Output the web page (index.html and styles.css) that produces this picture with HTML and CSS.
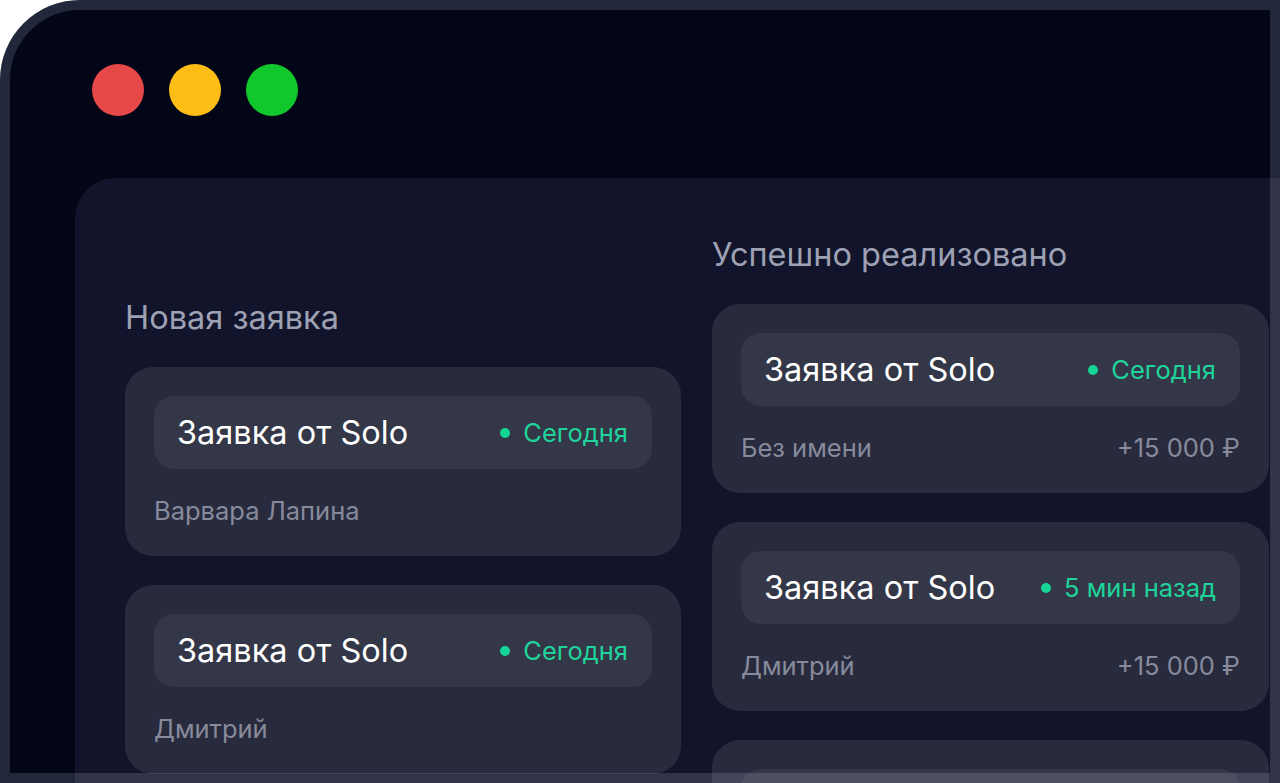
FILE: index.html
```html
<!DOCTYPE html>
<html lang="ru">
<head>
  <meta charset="UTF-8" />
  <meta name="viewport" content="width=device-width, initial-scale=1.0" />
  <title>Заявки</title>
  <link rel="stylesheet" href="styles.css">
</head>
<body>
  <div class="window">
    <div class="titlebar">
      <span class="light red"></span>
      <span class="light yellow"></span>
      <span class="light green"></span>
    </div>

    <div class="panel">
      <div class="column column-left">
        <h2>Новая заявка</h2>

        <div class="card">
          <div class="pill">
            <span class="title">Заявка от Solo</span>
            <span class="status">Сегодня</span>
          </div>
          <div class="meta">
            <span>Варвара Лапина</span>
          </div>
        </div>

        <div class="card">
          <div class="pill">
            <span class="title">Заявка от Solo</span>
            <span class="status">Сегодня</span>
          </div>
          <div class="meta">
            <span>Дмитрий</span>
          </div>
        </div>
      </div>

      <div class="column">
        <h2>Успешно реализовано</h2>

        <div class="card">
          <div class="pill">
            <span class="title">Заявка от Solo</span>
            <span class="status">Сегодня</span>
          </div>
          <div class="meta">
            <span>Без имени</span>
            <span>+15 000 ₽</span>
          </div>
        </div>

        <div class="card">
          <div class="pill">
            <span class="title">Заявка от Solo</span>
            <span class="status">5 мин назад</span>
          </div>
          <div class="meta">
            <span>Дмитрий</span>
            <span>+15 000 ₽</span>
          </div>
        </div>

        <!-- next card is cut off by the window edge -->
        <div class="card">
          <div class="pill"></div>
        </div>
      </div>
    </div>
  </div>
</body>
</html>
```

FILE: styles.css
```css
html, body {
  margin: 0;
  padding: 0;
  background: #ffffff;
}

body {
  font-family: Inter, "Noto Sans", Arial, sans-serif;
  overflow: hidden;
}

.window {
  position: relative;
  width: 1280px;
  height: 783px;
  background: #020617;
  border-top-left-radius: 80px;
  overflow: hidden;
}

/* frame drawn over everything, like the original semi-transparent border */
.window::after {
  content: "";
  position: absolute;
  top: 0;
  left: 0;
  right: 0;
  bottom: 0;
  border: 10px solid rgba(200, 206, 240, 0.17);
  border-top-left-radius: 80px;
  pointer-events: none;
}

.titlebar {
  display: flex;
  gap: 25px;
  padding: 64px 0 0 92px;
}

.light {
  width: 52px;
  height: 52px;
  border-radius: 50%;
}

.red { background: #e74848; }
.yellow { background: #febc17; }
.green { background: #12c72c; }

.panel {
  display: flex;
  align-items: flex-start;
  gap: 31px;
  margin: 62px 0 0 75px;
  padding: 59px 0 0 50px;
  width: 1300px;
  height: 700px;
  background: #11142a;
  border-top-left-radius: 40px;
}

.column {
  display: flex;
  flex-direction: column;
  gap: 29px;
  width: 557px;
  flex-shrink: 0;
}

.column-left {
  width: 556px;
  margin-top: 63px;
}

h2 {
  margin: 0 0 2px;
  font-size: 32.5px;
  line-height: 36px;
  font-weight: 400;
  color: #9ea1b4;
}

.card {
  background: #282b3e;
  border-radius: 28px;
  padding: 29px 29px 30px;
}

.pill {
  display: flex;
  align-items: center;
  justify-content: space-between;
  height: 73px;
  padding: 0 24px 0 23px;
  background: #343747;
  border-radius: 20px;
}

.title {
  font-size: 32.5px;
  color: #ffffff;
}

.status {
  display: flex;
  align-items: center;
  gap: 13px;
  font-size: 25.5px;
  color: #1fd49b;
}

.status::before {
  content: "";
  width: 10px;
  height: 10px;
  border-radius: 50%;
  background: #15d596;
}

.meta {
  display: flex;
  justify-content: space-between;
  margin-top: 27px;
  font-size: 25.5px;
  line-height: 30px;
  color: #878a9b;
}
```
